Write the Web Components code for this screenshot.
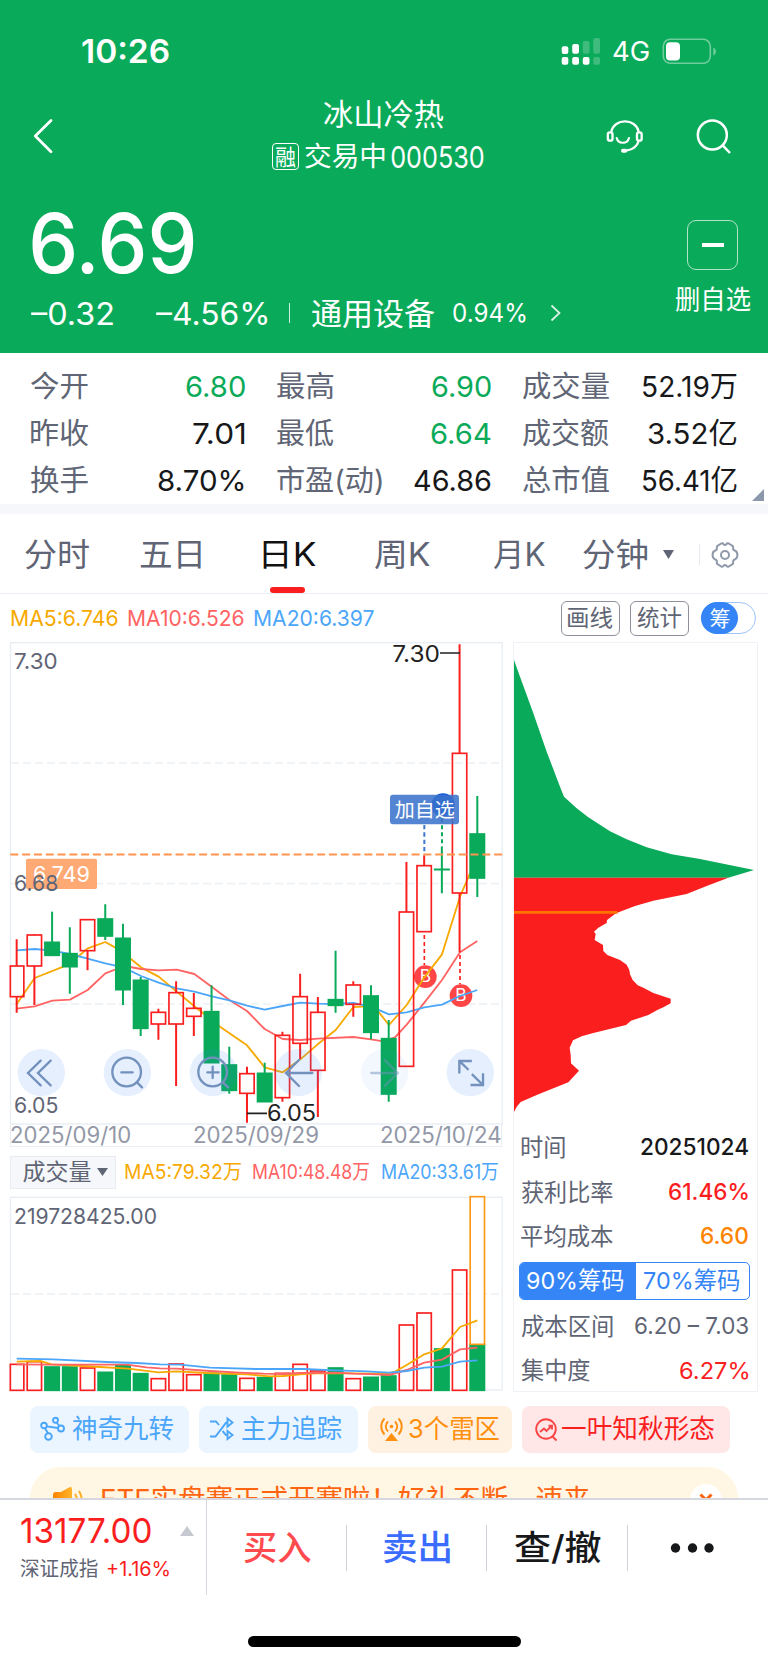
<!DOCTYPE html>
<html lang="zh-CN">
<head>
<meta charset="utf-8">
<title>冰山冷热 000530</title>
<style>
html,body{margin:0;padding:0;background:#fff}
body{width:768px;height:1663px;overflow:hidden;font-family:Inter,"Noto Sans CJK SC",sans-serif;color:#17181a}
</style>
</head>
<body>
<stock-app></stock-app>
<script>
const define = (name, html, setup) => customElements.define(name, class extends HTMLElement {
  constructor() {
    super();
    const t = document.createElement('template');
    t.innerHTML = html;
    this.attachShadow({mode: 'open'}).append(t.content.cloneNode(true));
    if (setup) setup(this.shadowRoot);
  }
});

/* Single line of text stretched so its ink is exactly `w` pixels wide; `gap` is the space before it. */
const pen = document.createElement('canvas').getContext('2d');
customElements.define('fit-text', class extends HTMLElement {
  constructor() {
    super();
    this.attachShadow({mode: 'open'}).innerHTML =
      '<style>:host{display:block;flex:none;height:1em;line-height:1em;white-space:nowrap}span{display:inline-block;transform-origin:0 50%}</style><span><slot></slot></span>';
  }
  connectedCallback() {
    const cs = getComputedStyle(this), w = +this.getAttribute('w');
    if (this.hasAttribute('gap')) this.style.marginLeft = this.getAttribute('gap') + 'px';
    pen.font = `${cs.fontWeight} ${cs.fontSize} ${cs.fontFamily}`;
    const m = pen.measureText(this.textContent.trim());
    const s = w / (m.actualBoundingBoxLeft + m.actualBoundingBoxRight);
    this.style.width = w + 'px';
    this.shadowRoot.querySelector('span').style.transform =
      `translateX(${m.actualBoundingBoxLeft * s}px) scaleX(${s})`;
  }
});

define('status-bar', `
<style>
:host{display:flex;align-items:center;height:90px;padding:13px 0 0 82px;box-sizing:border-box;color:#fff}
.time{font-size:33px;font-weight:600}.net{font-size:27px;font-weight:400}
svg{flex:none}
</style>
<fit-text class="time" w="87">10:26</fit-text>
<svg style="margin-left:392px" width="40" height="28" viewBox="0 0 40 28" fill="#fff"><rect x=".7" y="8.3" width="6.6" height="7.6" rx="2"/><rect x="11.2" y="6" width="6.8" height="9.8" rx="2"/><g opacity=".22"><rect x="21.8" y="3" width="6.7" height="12.8" rx="2"/><rect x="32.3" y="0" width="6.7" height="15.8" rx="2"/><rect x="32.3" y="19" width="6.7" height="7.7" rx="2"/></g><rect x=".7" y="19" width="6.6" height="7.7" rx="2"/><rect x="11.2" y="19" width="6.8" height="7.7" rx="2"/><rect x="21.8" y="19" width="6.7" height="7.7" rx="2"/></svg>
<fit-text class="net" w="36" gap="12">4G</fit-text>
<svg style="margin-left:13px" width="56" height="27" viewBox="0 0 56 27"><rect x="1.3" y="1.3" width="47" height="24" rx="7" fill="none" stroke="#fff" stroke-opacity=".42" stroke-width="1.6"/><rect x="4" y="4.2" width="14" height="18.4" rx="4" fill="#fff"/><path d="M51.3 9.5q2.7 1 2.7 4t-2.7 4z" fill="#fff" opacity=".42"/></svg>
`);

define('stock-nav', `
<style>
:host{display:flex;align-items:center;height:92px;color:#fff;padding-left:32px}
svg{flex:none}
.mid{width:213px;margin-left:218px;height:92px}
.name{font-size:30px;margin:9px 0 0 52px}
.row{display:flex;align-items:center;height:30px;margin-top:12.5px}
.box{width:25px;height:25px;border:1.5px solid #fff;border-radius:4px;display:flex;align-items:center;font-size:22px}
.s{font-size:27px}.c{font-size:30px}
</style>
<svg width="22" height="36" viewBox="0 0 22 36" fill="none" stroke="#fff" stroke-width="2.8" stroke-linecap="round" stroke-linejoin="round"><path d="M19 2.5 3.3 18 19 33.8"/></svg>
<div class="mid"><fit-text class="name" w="120">冰山冷热</fit-text>
<div class="row"><div class="box"><fit-text w="20" gap="2.5">融</fit-text></div><fit-text class="s" w="80" gap="5.5">交易中</fit-text><fit-text class="c" w="93" gap="6.5">000530</fit-text></div></div>
<svg style="margin-left:120px" width="40" height="37.3" viewBox="165 289 120 112" fill="none" stroke="#fff" stroke-width="7"><path d="M184 333C192 292 258 292 266 333M266 361C262 376 248 388 231 389"/><rect x="173.500" y="335" width="14" height="25" rx="6"/><rect x="261" y="335" width="14" height="25" rx="6"/><path d="M200 352C205 371 232 371 237 352" stroke-width="6.500" stroke-linecap="round"/><path d="M219 390h7" stroke-width="12" stroke-linecap="round"/></svg>
<svg style="margin-left:50px" width="38" height="38" viewBox="435 289 114 114" fill="none" stroke="#fff" stroke-width="7.500"><circle cx="487" cy="343" r="43.500"/><path d="M518 374 540 397"/></svg>
`);

define('quote-head', `
<style>
:host{display:flex;height:170.500px;color:#fff;justify-content:space-between;padding:0 17px 0 31px}
.price{font-size:82px;font-weight:450;margin-top:21px}
.row{display:flex;align-items:center;height:40px;margin-top:8px;font-size:31px}
i{width:1px;height:20px;background:#fff;margin-left:21px;opacity:.8}
.p{font-size:25.500px}
.side{width:76px;display:flex;flex-direction:column;align-items:center;padding-top:37.500px}
.box{width:49px;height:48px;border:1.5px solid #b3e4ca;border-radius:9px;display:flex;align-items:center;justify-content:center;margin-right:1px}
.box b{width:22px;height:4px;background:#fff}
.side fit-text{font-size:26px;margin-top:17.500px}
</style>
<div><fit-text class="price" w="162" gap="1">6.69</fit-text>
<div class="row"><fit-text w="82">–0.32</fit-text><fit-text w="111" gap="43">–4.56%</fit-text><i style="margin-left:22px"></i><fit-text w="123" gap="22">通用设备</fit-text><fit-text class="p" w="73" gap="18">0.94%</fit-text><svg style="margin-left:24px" width="12" height="18" viewBox="0 0 12 18" fill="none" stroke="#fff" stroke-width="1.8" opacity=".85"><path d="M1.500 1.500 9.500 9 1.500 16.500"/></svg></div></div>
<div class="side"><div class="box"><b></b></div><fit-text w="75">删自选</fit-text></div>
`);

define('quote-stats', `
<style>
:host{display:grid;grid-template-columns:repeat(3,214px);grid-auto-rows:46.800px;column-gap:32px;padding:11px 31px 0;height:140.500px;border-bottom:10px solid #f5f7fb;font-size:29px;position:relative}
div{display:flex;align-items:center;justify-content:space-between}
.l{color:#606675}.g{color:#0aaa59}
svg{position:absolute;right:4px;bottom:3px}
</style>
<div><fit-text class="l" w="57">今开</fit-text><fit-text class="g" w="59">6.80</fit-text></div>
<div><fit-text class="l" w="57">最高</fit-text><fit-text class="g" w="59">6.90</fit-text></div>
<div><fit-text class="l" w="86">成交量</fit-text><fit-text w="94">52.19万</fit-text></div>
<div><fit-text class="l" w="57">昨收</fit-text><fit-text w="52">7.01</fit-text></div>
<div><fit-text class="l" w="57">最低</fit-text><fit-text class="g" w="60">6.64</fit-text></div>
<div><fit-text class="l" w="86">成交额</fit-text><fit-text w="89">3.52亿</fit-text></div>
<div><fit-text class="l" w="57">换手</fit-text><fit-text w="86" style="margin-right:1px">8.70%</fit-text></div>
<div><fit-text class="l" w="105">市盈(动)</fit-text><fit-text w="77">46.86</fit-text></div>
<div><fit-text class="l" w="86">总市值</fit-text><fit-text w="94">56.41亿</fit-text></div>
<svg width="12" height="12"><path d="M12 0V12H0z" fill="#8b98ab"/></svg>
`);

define('period-tabs', `
<style>
:host{display:flex;align-items:center;height:77px;padding-top:2px;border-bottom:1px solid #eaeef4;font-size:32px;color:#5f6575;padding-left:25px;position:relative}
.on{color:#111}
svg{flex:none}
i{width:1px;height:21px;background:#e6e9ef;margin-left:25.500px}
u{position:absolute;left:269.500px;bottom:0;width:35.500px;height:6px;border-radius:3px;background:#fa1e1e}
</style>
<fit-text w="64">分时</fit-text><fit-text w="61" gap="51">五日</fit-text><fit-text class="on" w="53" gap="61.5">日K</fit-text><fit-text w="55" gap="59.5">周K</fit-text><fit-text w="52" gap="62.5">月K</fit-text><fit-text w="64" gap="38">分钟</fit-text>
<svg style="margin-left:16px" width="11" height="9"><path d="M0 0H11L5.500 9z" fill="#5f6575"/></svg><i></i>
<svg style="margin-left:11px" width="28" height="28" viewBox="0 0 28 28" fill="none" stroke="#8f99a9" stroke-width="2" stroke-linejoin="round"><path d="M10.200 2.500Q12 2 12.500 3.200Q14 4.700 15.500 3.200Q16 2 17.800 2.500L21.500 4.800Q22.500 5.800 22.100 7Q22 9.300 24.200 9.800Q26.400 10.700 26.400 14Q26.400 17.300 24.200 18.200Q22 18.700 22.100 21Q22.500 22.200 21.500 23.200L17.800 25.500Q16 26 15.500 24.800Q14 23.300 12.500 24.800Q12 26 10.200 25.500L6.500 23.200Q5.500 22.200 5.900 21Q6 18.700 3.800 18.200Q1.600 17.300 1.600 14Q1.600 10.700 3.800 9.800Q6 9.300 5.900 7Q5.500 5.800 6.500 4.800z"/><circle cx="14" cy="14" r="4"/></svg><u></u>
`);

define('ma-bar', `
<style>
:host{display:flex;align-items:center;height:48px;font-size:22px;padding-left:11px;box-sizing:border-box}
.b{width:57px;height:33px;border:1.500px solid #8e909b;border-radius:6px;display:flex;align-items:center;color:#5f6575;font-size:23px}
.t{width:53px;height:30.500px;border:1px solid #9fc6fb;border-radius:17px;margin-left:12px}
.t div{width:37px;height:32.500px;border-radius:17px;background:#3585f7;color:#fff;margin:-1px;display:flex;align-items:center;font-size:21px}
</style>
<fit-text w="107" style="color:#f7a900">MA5:6.746</fit-text><fit-text w="116" gap="10" style="color:#ff6363">MA10:6.526</fit-text><fit-text w="120" gap="10" style="color:#4ba6fa">MA20:6.397</fit-text>
<div class="b" style="margin-left:187px"><fit-text w="45" gap="6">画线</fit-text></div><div class="b" style="margin-left:10px"><fit-text w="45" gap="6">统计</fit-text></div>
<div class="t"><div><fit-text w="20" gap="8.500">筹</fit-text></div></div>
`);

const step = i => 50 + 53.15 * i;
const line = (pts, c) => `<polyline points="${pts}" fill="none" stroke="${c}" stroke-width="5.500" stroke-linejoin="round"/>`;
const label = (x, y, w, t, c, s = 67) => `<text x="${x}" y="${y}" textLength="${w}" lengthAdjust="spacingAndGlyphs" font-size="${s}" fill="${c}">${t}</text>`;
const RED = '#fa1e1e', GREEN = '#09aa59', GOLD = '#f7a900', PINK = '#ff6363', BLUE = '#4ba6fa', GREY = '#5f6575';

/* open/close body and high/low wick of each day, three units per pixel */
const days = [['r',928,1008,1100,1148],['r',913,915,1008,1125],['g',845,937,976,976],['g',892,971,1010,1091],['r',868,869,962,1021],['g',823,867,918,930],['g',881,925,1079,1125],['g',1041,1051,1195,1218],['r',1136,1147,1182,1229],['r',1054,1088,1182,1368],['r',1089,1135,1159,1218],['g',1066,1145,1298,1298],['g',1250,1305,1381,1391],['r',1310,1331,1390,1478],['g',1298,1330,1415,1415],['r',1205,1216,1403,1415],['r',1031,1100,1240,1287],['r',1101,1147,1321,1461],['g',962,1109,1126,1148],['r',1054,1065,1123,1160],['g',1066,1098,1207,1228],['g',1170,1226,1392,1415],['r',696,846,1309,1309],['r',676,707,905,905],['g',650,718,719,790],['r',43,370,789,967],['g',498,612,744,801]];

define('k-chart', `<style>:host{display:flow-root;height:482px}svg{display:block;margin-top:-12px;overflow:visible}</style><svg width="510" height="500" viewBox="0 0 1530 1500"></svg>`, root => {
  let s = '<rect x="31.500" y="38" width="1475" height="1444" fill="none" stroke="#e8edf3" stroke-width="4"/>';
  for (const y of [399, 761, 1122]) s += `<path d="M33 ${y}H1505" stroke="#edf1f5" stroke-width="5" stroke-dasharray="24 12"/>`;
  s += '<circle cx="1276" cy="1040" r="34" fill="#ff4545"/>' + label(1259,1055,34,'B','#fff',50) + '<circle cx="1383" cy="1097" r="34" fill="#ff4545"/>' + label(1366,1112,34,'B','#fff',50);
  s += `<path d="M1273 915V1006M1380 975V1063" stroke="${RED}" stroke-width="5" stroke-dasharray="12 9"/>`;
  s += line('50,1122 104,1044 190,1010 240,975 263,955 316,936 350,955 390,985 423,1012 476,1040 530,1085 585,1130 660,1190 741,1246 794,1312 848,1327 901,1288 953,1243 1007,1200 1060,1131 1100,1129 1135,1145 1167,1185 1220,1125 1273,1042 1326,973 1380,800 1410,730', GOLD);
  s += line('50,1136 104,1129 157,1112 210,1109 263,1080 316,1030 350,1017 390,1011 423,1017 476,1021 530,1019 583,1032 636,1071 688,1110 741,1143 780,1183 794,1197 848,1227 901,1230 954,1226 1060,1221 1113,1228 1150,1234 1185,1222 1220,1184 1273,1118 1326,1050 1380,967 1432,933', PINK);
  s += line('50,961 104,957 157,962 210,972 263,986 316,1000 370,1012 423,1038 476,1058 530,1075 583,1085 636,1099 688,1111 741,1127 794,1139 848,1128 901,1118 954,1121 1007,1122 1060,1119 1113,1130 1167,1153 1220,1147 1273,1132 1326,1124 1380,1098 1432,1080', BLUE);
  days.forEach(([k, hi, top, bot, lo], i) => {
    const x = step(i), c = k == 'r' ? RED : GREEN;
    const l = i ? x - 21.5 : 31;
    s += `<path d="M${x} ${hi}V${top}M${x} ${bot}V${lo}" stroke="${c}" stroke-width="6"/><rect x="${l}" y="${top}" width="${x + 21.5 - l}" height="${bot - top}" fill="${k == 'r' ? 'none' : c}" stroke="${c}" stroke-width="5"/>`;
  });
  s += '<path d="M31 673.500H1507" stroke="#ff9350" stroke-width="6" stroke-dasharray="24 11.400"/>';
  s += '<path d="M1273 585V672" stroke="#3e78cf" stroke-width="6" stroke-dasharray="13 9"/><path d="M1326 565V650" stroke="#09aa59" stroke-width="6" stroke-dasharray="12 9"/><circle cx="1329" cy="525" r="35" fill="#1457e0"/><rect x="1170" y="494" width="207" height="89" rx="9" fill="#3b73cb" fill-opacity=".87"/>' + label(1184,560,180,'加自选','#fff',59);
  s += label(1177,95,143,'7.30','#222',68) + '<path d="M1320 69H1380M741 1450H801" stroke="#222" stroke-width="5"/>' + label(801,1473,147,'6.05','#222',68);
  s += '<rect x="78" y="686" width="213" height="91" rx="5" fill="#ffa975"/>' + label(99,755,171,'6.749','#fff',66) + label(42,118,131,'7.30',GREY,66) + label(42,783,133,'6.68',GREY,66) + label(42,1449,133,'6.05',GREY,66);
  for (const [x, o] of [[124,.13],[382,.13],[640,.13],[895,.13],[1154,.06],[1411,.13]]) s += `<circle cx="${x}" cy="1328" r="71" fill="#3482f5" fill-opacity="${o}"/>`;
  s += '<g fill="none" stroke="#7391bd" stroke-width="7" stroke-linecap="round"><path d="M122 1292 84 1329 122 1366M152 1292 114 1329 152 1366"/><circle cx="380" cy="1326" r="43"/><path d="M364 1327h34M411 1357 426 1372"/><circle cx="638" cy="1326" r="43"/><path d="M622 1327h34M638 1310v34M669 1357 684 1372"/><path d="M897 1290 858 1329 897 1368M860 1329H937"/><path d="M1114 1329H1192M1154 1290 1193 1329 1154 1368" stroke-opacity=".5"/><path d="M1378 1327V1293H1412M1380 1295 1403 1317M1449 1333V1365H1415M1448 1364 1418 1335" stroke-linecap="square"/></g>';
  root.querySelector('svg').innerHTML = s;
});

define('date-axis', `
<style>:host{display:flex;align-items:center;justify-content:space-between;width:492px;height:23px;padding-top:1px;margin-left:10px;border:1px solid #e8edf3;border-top:0;color:#9298a7;font-size:22.500px;box-sizing:border-box}</style>
<fit-text w="119">2025/09/10</fit-text><fit-text w="124">2025/09/29</fit-text><fit-text w="120">2025/10/24</fit-text>
`);

define('volume-bar', `
<style>
:host{display:flex;align-items:center;height:50px;padding-left:10px;font-size:20px}
.b{width:104px;height:31px;background:#f5f7fa;border:1px solid #e8ebf1;display:flex;align-items:center;color:#5f6575;font-size:23px}
svg{margin-left:6.500px}
</style>
<div class="b"><fit-text w="68" gap="11.500">成交量</fit-text><svg width="11" height="8"><path d="M0 0H11L5.500 8z" fill="#5f6575"/></svg></div>
<fit-text w="116" gap="9" style="color:#f7a900">MA5:79.32万</fit-text><fit-text w="116" gap="12" style="color:#ff6363">MA10:48.48万</fit-text><fit-text w="116" gap="13" style="color:#4ba6fa">MA20:33.61万</fit-text>
`);

define('volume-chart', `<style>:host{display:flow-root}svg{display:block;margin-top:-2px;overflow:visible}</style><svg width="510" height="196" viewBox="0 255 1530 588"></svg>`, root => {
  const tops = 'r763 r755 g771 g771 r774 g787 g767 g791 r806 r762 r794 g790 g795 r805 g803 r790 r763 r783 g774 r806 g802 g798 r645 r609 g717 r480 g703'.split(' ');
  let s = '<rect x="31.500" y="262" width="1475" height="578" fill="none" stroke="#e8edf3" stroke-width="4"/><path d="M33 552H1505" stroke="#edf1f5" stroke-width="5" stroke-dasharray="24 12"/>';
  tops.forEach((t, i) => {
    const c = t[0] == 'r' ? RED : GREEN, y = +t.slice(1), l = i ? step(i) - 21.5 : 31;
    s += `<rect x="${l}" y="${y}" width="${step(i) + 21.5 - l}" height="${841 - y}" fill="${t[0] == 'r' ? 'none' : c}" stroke="${c}" stroke-width="5"/>`;
  });
  s += '<rect x="1410.500" y="260" width="43" height="443" fill="#fff" stroke="#fc9a17" stroke-width="5"/>';
  s += line('50,755 120,753 155,763 300,771 385,776 476,787 530,784 620,789 740,793 810,799 850,798 900,793 960,789 1060,790 1120,791 1167,790 1185,785 1220,765 1273,733 1326,715 1380,651 1432,631', GOLD);
  s += line('50,763 130,764 380,764 440,772 480,775 530,776 630,783 720,788 790,791 850,792 900,789 1007,788 1060,791 1130,793 1167,795 1220,780 1273,758 1326,749 1380,718 1432,713', PINK);
  s += line('50,746 160,748 320,756 410,759 480,763 540,764 630,773 770,777 910,777 1007,781 1100,784 1167,788 1220,783 1273,773 1326,770 1380,755 1432,751', BLUE);
  root.querySelector('svg').innerHTML = s + label(42,342,429,'219728425.00',GREY,66);
});

define('chip-panel', `
<style>
:host{display:block;width:243.500px;height:747.500px;margin:0 0 0 2.500px;border:1px solid #eff2f6;color:#5f6575;font-size:23.500px}
svg{display:block;margin:-13px 0 1.500px -13.500px;overflow:visible}
.r{display:flex;align-items:center;justify-content:space-between;height:44.600px;padding:0 9px 0 7px}
fit-text+fit-text{font-size:23px}
.seg{display:flex;height:35.500px;width:229px;border:1.500px solid #3585f7;border-radius:5px;margin:3px 0 4.500px 5.500px;align-items:center;overflow:hidden;color:#3585f7}
.seg div{width:116px;height:37px;background:#3585f7;color:#fff;display:flex;align-items:center}
.m{font-weight:500}
</style>
<svg width="268" height="494" viewBox="0 0 804 1482"><path d="M42 90 60 140 100 250 140 365 180 470 192 500 230 535 265 562 330 604 380 628 440 652 515 673 600 687 762 720 685 743H42z" fill="#09aa59"/><path d="M42 743H685L620 768 560 792 460 812 405 828 348 850 321 870 320 879 295 893 282 905 287 912 284 930 309 945 310 963 322 975 360 990 380 1004 388 1020 390 1033 398 1050 413 1066 430 1073 460 1089 512 1106V1120L490 1132 472 1140 445 1155 393 1172 378 1185 280 1209 245 1219 219 1231 209 1253 212 1275 213 1300 237 1322 205 1357 110 1395 62 1416 50 1430 42 1446z" fill="#fa1e1e"/><path d="M42 847H352" stroke="#ff7300" stroke-width="8"/></svg>
<div class="r"><fit-text w="44">时间</fit-text><fit-text class="m" w="107" style="color:#17181a">20251024</fit-text></div>
<div class="r"><fit-text w="92">获利比率</fit-text><fit-text class="m" w="79" style="color:#fa1e1e">61.46%</fit-text></div>
<div class="r"><fit-text w="92">平均成本</fit-text><fit-text class="m" w="47" style="color:#ff8400">6.60</fit-text></div>
<div class="seg"><div><fit-text w="97" gap="7">90%筹码</fit-text></div><fit-text w="96" gap="8" style="font-size:23.500px">70%筹码</fit-text></div>
<div class="r"><fit-text w="92">成本区间</fit-text><fit-text w="113">6.20 – 7.03</fit-text></div>
<div class="r"><fit-text w="69">集中度</fit-text><fit-text w="68" style="color:#fa1e1e">6.27%</fit-text></div>
`);

define('tag-chip', `
<style>
:host{display:flex;align-items:center;flex:none;height:47px;border-radius:8px;box-sizing:border-box;font-size:26px}
</style><slot></slot>
`);

define('tag-row', `
<style>
:host{display:flex;padding:14.500px 0 14.500px 30px;height:47px}
.b{width:159px;background:#ebf5ff;color:#4ba6fa;margin-right:10px}
.o{width:143.500px;background:#fff1e2;color:#ff8f0f;margin-right:10.500px}
.r{width:208px;background:#ffe6e7;color:#fa1e1e}
svg{flex:none;fill:none;stroke:currentColor;stroke-width:1.900}
</style>
<tag-chip class="b"><svg style="margin-left:10px" width="25" height="26" viewBox="0 0 25 26"><circle cx="4" cy="9.500" r="2.800"/><circle cx="15.500" cy="4.300" r="2.500"/><circle cx="21" cy="12.500" r="3"/><circle cx="8.500" cy="20.500" r="3.300"/><path d="M6.600 10.400 18 12M5 12.300 8 17.200M16.500 6.500 19.500 10"/></svg><fit-text w="101" gap="6.5">神奇九转</fit-text></tag-chip>
<tag-chip class="b"><svg style="margin-left:11px" width="25" height="26" viewBox="0 0 25 26"><path d="M0 5.500H6L9 9M0 20.500H5.500L16 6.800H17.500M12.500 15 16 19H17.500M17.500 2.500V10.700L22.500 6.600zM17.500 15V23L22.500 19z"/></svg><fit-text w="100" gap="6.5">主力追踪</fit-text></tag-chip>
<tag-chip class="o"><svg style="margin-left:12px" width="23" height="26" viewBox="0 0 23 26"><path d="M4.500 2.500C.2 7 .2 14 4.500 18.500M18.500 2.500C22.800 7 22.800 14 18.500 18.500M8 5.500C5 8.500 5 12.500 8 15.500M15 5.500C18 8.500 18 12.500 15 15.500"/><circle cx="11.500" cy="10.500" r="1.800" fill="currentColor" stroke="none"/><path d="M11.500 17 18 25H5z" fill="currentColor" stroke="none"/></svg><fit-text w="90" gap="5.5">3个雷区</fit-text></tag-chip>
<tag-chip class="r"><svg style="margin-left:12.5px" width="23" height="25" viewBox="0 0 23 25" opacity=".8"><circle cx="11" cy="12" r="9.800"/><path d="M17.500 19.500 21.500 23.500M5 15 9 11.500 11.500 14 16.500 9M13.500 8.800H17V12.500"/></svg><fit-text w="152" gap="4.5">一叶知秋形态</fit-text></tag-chip>
`);

define('notice-bar', `
<style>
:host{display:block;height:31px;overflow:hidden;padding-left:30px}
.in{display:flex;align-items:center;width:708px;height:66px;border-radius:31px;background:#fff7e4;color:#ff6510;font-size:27.500px}
.x{width:32px;height:32px;border-radius:50%;background:#fff;margin-left:100px;display:flex;align-items:center;justify-content:center}
svg{flex:none}
</style>
<div class="in"><svg style="margin-left:22px" width="32" height="30" viewBox="0 0 32 30"><defs><linearGradient id="g"><stop stop-color="#ff8200"/><stop offset="1" stop-color="#ffb52c"/></linearGradient></defs><path d="M4 7H9L17 2.500Q20 1 20 4V26Q20 29 17 27.500L9 23H4Q1 23 1 20V10Q1 7 4 7z" fill="url(#g)"/><path d="M23 9Q27 15 23 21M27 6Q32.500 15 27 24" fill="none" stroke="#ffae26" stroke-width="2"/></svg><fit-text w="488" gap="18">ETF实盘赛正式开赛啦！好礼不断，速来</fit-text><div class="x"><svg width="14" height="14" viewBox="0 0 14 14" stroke="#ff6510" stroke-width="3"><path d="M1.500 1.500 12.500 12.500M12.500 1.500 1.500 12.500"/></svg></div></div>
`);

define('trade-bar', `
<style>
:host{display:flex;height:96px;border-top:2px solid #d5d8df;background:#fff;font-size:34px;font-weight:500;align-items:center}
.ix{width:206px;height:95px;border-right:1px solid #d5d8df;align-self:flex-start;font-weight:400;color:#fa1e1e}
.a{display:flex;align-items:center;height:34px;padding:14px 0 0 21px}
.b{display:flex;align-items:center;height:22px;padding:10px 0 0 20px;font-size:20.500px}
i{width:1px;height:46px;background:#cfd1d8}
svg{flex:none}
</style>
<div class="ix"><div class="a"><fit-text w="130">13177.00</fit-text><svg style="margin-left:29px" width="14" height="10"><path d="M7 0 14 10H0z" fill="#c6c9cf"/></svg></div>
<div class="b"><fit-text w="78" style="color:#5f6575">深证成指</fit-text><fit-text w="62" gap="9">+1.16%</fit-text></div></div>
<fit-text w="66.5" gap="36.5" style="color:#ff4b4e">买入</fit-text><i style="margin-left:36px"></i><fit-text w="66" gap="37" style="color:#396cff">卖出</fit-text><i style="margin-left:36px"></i><fit-text w="85.5" gap="27.5">查/撤</fit-text><i style="margin-left:27px"></i>
<svg style="margin-left:42px" width="44" height="10" fill="#17181a"><circle cx="5.500" cy="5" r="4.700"/><circle cx="22.500" cy="5" r="4.700"/><circle cx="39" cy="5" r="4.700"/></svg>
`);

define('stock-app', `
<style>
:host{display:block;width:768px;height:1663px;overflow:hidden}
header{background:#09aa59;height:352.500px}
.charts{display:grid;grid-template-columns:510px 1fr;height:749px}
.home{width:273px;height:10.500px;border-radius:6px;background:#000;margin:40px 0 0 247.500px}
</style>
<header><status-bar></status-bar><stock-nav></stock-nav><quote-head></quote-head></header>
<quote-stats></quote-stats><period-tabs></period-tabs><ma-bar></ma-bar>
<div class="charts"><div><k-chart></k-chart><date-axis></date-axis><volume-bar></volume-bar><volume-chart></volume-chart></div><chip-panel></chip-panel></div>
<tag-row></tag-row><notice-bar></notice-bar><trade-bar></trade-bar><div class="home"></div>
`);
</script>
</body>
</html>
